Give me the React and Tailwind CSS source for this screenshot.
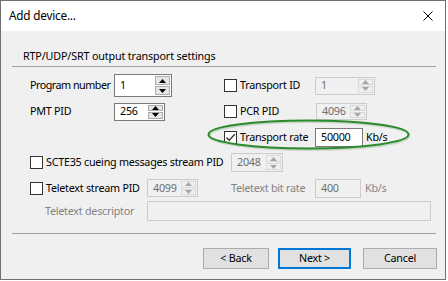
const Arrow = ({ up, color }) => (
	<svg width="7" height="4" viewBox="0 0 7 4">
		{up ? (
			<path d="M0 4 L3.5 0 L7 4 Z" fill={color} />
		) : (
			<path d="M0 0 L3.5 4 L7 0 Z" fill={color} />
		)}
	</svg>
);

const Spin = ({ value, w, h, disabled }) => {
	const arrow = disabled ? "#a6a6a6" : "#000000";
	return (
		<div
			className={`flex shrink-0 border ${
				disabled ? "border-[#cccccc] bg-[#f0f0f0]" : "border-[#7a7a7a] bg-white"
			}`}
			style={{ width: w, height: h }}>
			<div
				className={`flex-1 flex items-center pl-[5px] leading-none ${
					disabled ? "text-[#6d6d6d]" : "text-black"
				}`}>
				{value}
			</div>
			<div className="w-[17px] flex flex-col p-px gap-px">
				<div
					className={`flex-1 flex items-center justify-center border ${
						disabled ? "border-[#d9d9d9] bg-[#f0f0f0]" : "border-[#adadad] bg-[#e5e5e5]"
					}`}>
					<Arrow up color={arrow} />
				</div>
				<div
					className={`flex-1 flex items-center justify-center border ${
						disabled ? "border-[#d9d9d9] bg-[#f0f0f0]" : "border-[#adadad] bg-[#e5e5e5]"
					}`}>
					<Arrow color={arrow} />
				</div>
			</div>
		</div>
	);
};

const Box = ({ value, w, h, disabled }) => (
	<div
		className={`flex items-center shrink-0 pl-[5px] border leading-none ${
			disabled
				? "border-[#cccccc] bg-[#f0f0f0] text-[#6d6d6d]"
				: "border-[#7a7a7a] bg-white text-black"
		}`}
		style={{ width: w, height: h }}>
		{value}
	</div>
);

const Check = ({ checked }) => (
	<div className="w-[13px] h-[13px] shrink-0 border border-[#333333] bg-white flex items-center justify-center">
		{checked && (
			<svg width="11" height="11" viewBox="0 0 11 11">
				<path d="M1.5 5.5 L4.2 8.3 L9.8 2.2" fill="none" stroke="#333333" strokeWidth="1.3" />
			</svg>
		)}
	</div>
);

export default function App() {
	return (
		<div className="w-[448px] h-[281px] bg-white font-['Noto_Sans',sans-serif] text-[10.75px] tracking-[-0.25px] text-black whitespace-nowrap">
			<div className="w-[446px] h-[280px] border border-[#707070] flex flex-col">
				<div className="h-[30px] bg-white flex items-center justify-between pl-[8px] pr-[12px]">
					<span className="text-[11.75px] tracking-[-0.2px]">Add device...</span>
					<svg width="10" height="10" viewBox="0 0 10 10">
						<path d="M0.5 0.5 L9.5 9.5 M9.5 0.5 L0.5 9.5" stroke="#000000" strokeWidth="1" />
					</svg>
				</div>
				<div className="flex-1 bg-[#f0f0f0] flex flex-col">
					<div className="mt-[17px] ml-[22px] h-[16px] leading-[16px] tracking-[-0.15px]">
						RTP/UDP/SRT output transport settings
					</div>
					<div className="mt-[2px] ml-[11px] w-[424px] h-px bg-[#a0a0a0]" />

					<div className="mt-[7px] ml-[29px] h-[23px] flex items-center">
						<div className="w-[194px] flex items-center">
							<span className="w-[84px] tracking-[-0.5px]">Program number</span>
							<Spin value="1" w={58} h={23} />
						</div>
						<div className="w-[91px] flex items-center gap-[3px]">
							<Check />
							<span>Transport ID</span>
						</div>
						<Spin value="1" w={60} h={18} disabled />
					</div>

					<div className="mt-[5px] ml-[29px] h-[19px] flex items-center">
						<div className="w-[194px] flex items-center">
							<span className="w-[84px]">PMT PID</span>
							<Spin value="256" w={51} h={18} />
						</div>
						<div className="w-[92px] flex items-center gap-[3px]">
							<Check />
							<span>PCR PID</span>
						</div>
						<Spin value="4096" w={51} h={17} disabled />
					</div>

					<div className="mt-[7px] ml-[29px] h-[19px] flex items-center relative">
						<div className="w-[194px]" />
						<div className="w-[91px] flex items-center gap-[3px]">
							<Check checked />
							<span>Transport rate</span>
						</div>
						<Box value="50000" w={48} h={19} />
						<span className="ml-[3px]">Kb/s</span>
						<svg
							className="absolute left-[177px] top-[-9px]"
							width="204"
							height="33"
							viewBox="0 0 204 33">
							<ellipse cx="102.5" cy="17" rx="100" ry="14" fill="none" stroke="#c8d8c8" strokeWidth="2" />
							<ellipse cx="101.5" cy="15.5" rx="100" ry="14" fill="none" stroke="#2b8a2b" strokeWidth="2" />
						</svg>
					</div>

					<div className="mt-[6px] ml-[29px] h-[19px] flex items-center">
						<div className="w-[201px] flex items-center gap-[3px]">
							<Check />
							<span>SCTE35 cueing messages stream PID</span>
						</div>
						<Spin value="2048" w={52} h={19} disabled />
					</div>

					<div className="mt-[7px] ml-[29px] h-[18px] flex items-center">
						<div className="w-[117px] flex items-center gap-[3px]">
							<Check />
							<span>Teletext stream PID</span>
						</div>
						<Spin value="4099" w={51} h={18} disabled />
						<span className="ml-[33px] w-[84px] text-[#838383]">Teletext bit rate</span>
						<Box value="400" w={46} h={19} disabled />
						<span className="ml-[4px] text-[#838383]">Kb/s</span>
					</div>

					<div className="mt-[4px] ml-[29px] h-[20px] flex items-center">
						<span className="w-[117px] pl-[15px] text-[#838383]">Teletext descriptor</span>
						<Box value="" w={284} h={20} disabled />
					</div>

					<div className="mt-[12px] ml-[11px] w-[424px] h-px bg-[#a0a0a0]" />

					<div className="mt-[14px] ml-[202px] h-[21px] flex">
						<button className="w-[66px] h-[21px] bg-[#e1e1e1] border border-[#adadad] leading-none">
							&lt; Back
						</button>
						<button className="ml-[9px] w-[73px] h-[21px] bg-[#e1e1e1] border-2 border-[#0078d7] leading-none">
							Next &gt;
						</button>
						<button className="ml-[12px] w-[74px] h-[21px] bg-[#e1e1e1] border border-[#adadad] leading-none">
							Cancel
						</button>
					</div>
				</div>
			</div>
		</div>
	);
}
